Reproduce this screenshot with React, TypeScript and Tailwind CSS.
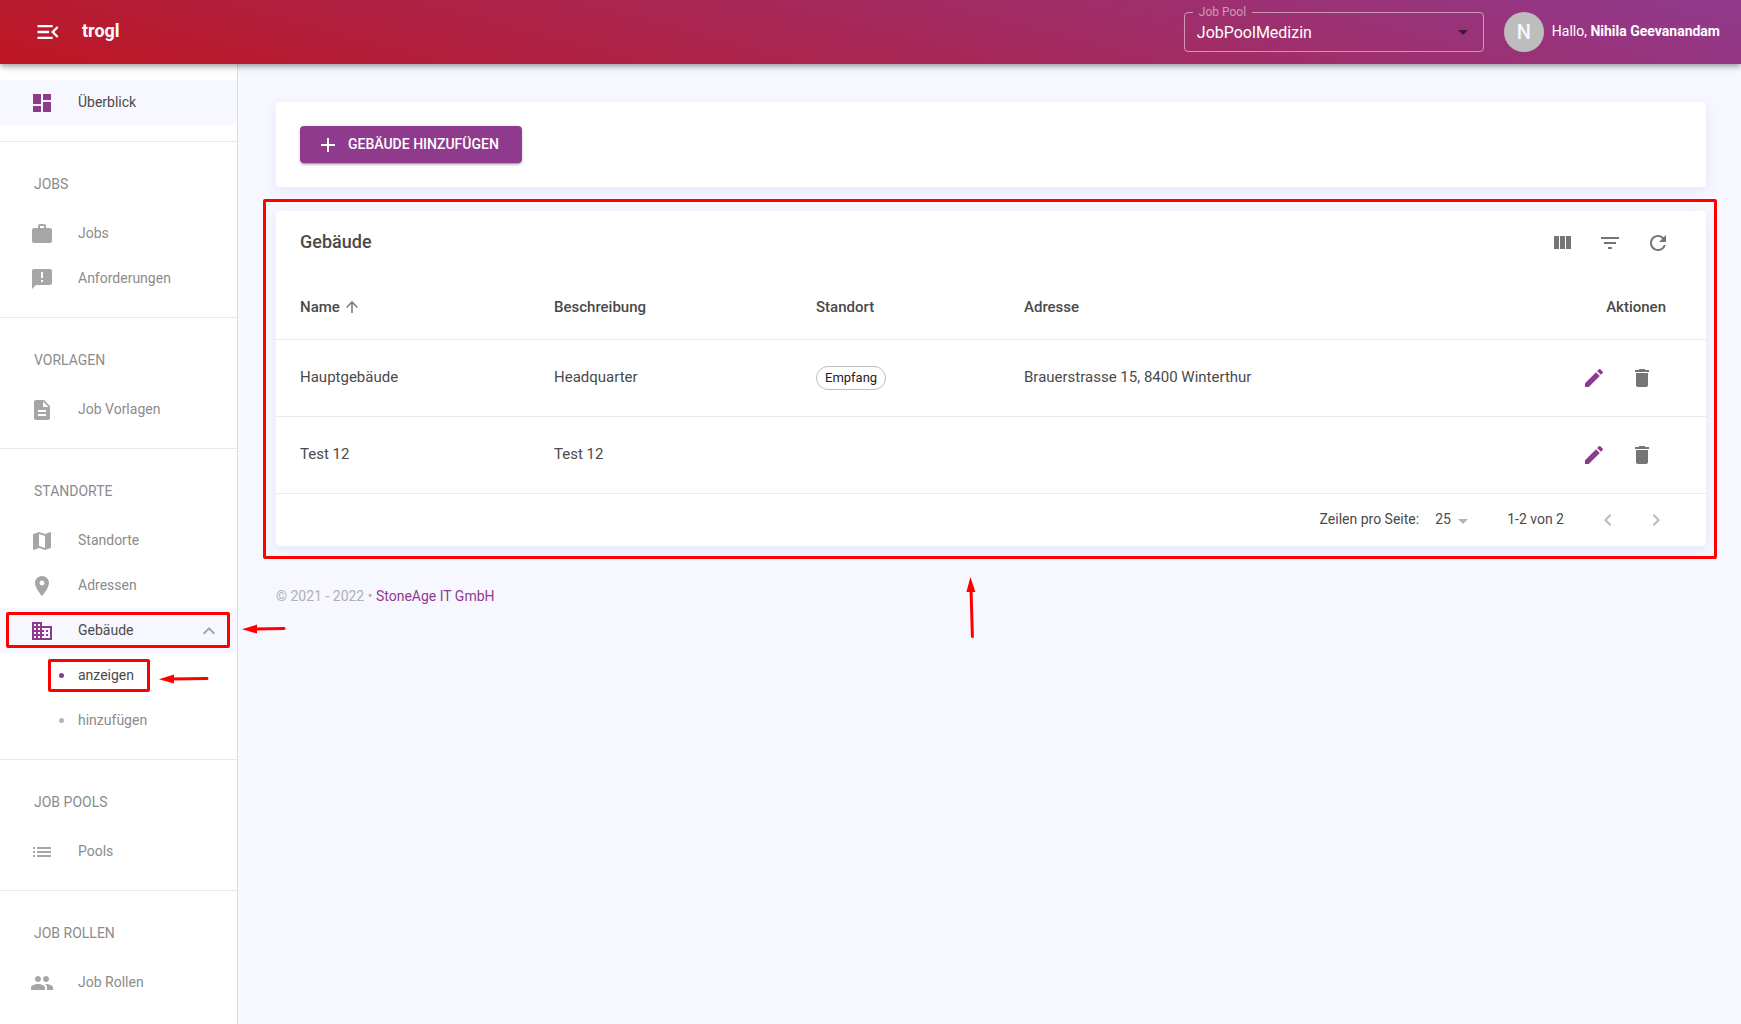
import { Fragment } from 'react';
import type { IconType } from 'react-icons';
import {
  MdAdd,
  MdAnnouncement,
  MdArrowDropDown,
  MdArrowUpward,
  MdBusiness,
  MdChevronLeft,
  MdChevronRight,
  MdDashboard,
  MdDelete,
  MdDescription,
  MdEdit,
  MdExpandLess,
  MdFilterList,
  MdList,
  MdLocationOn,
  MdMap,
  MdMenuOpen,
  MdPeople,
  MdRefresh,
  MdWork,
} from 'react-icons/md';

interface NavItem {
  label: string;
  icon: IconType;
  active?: boolean;
  children?: { label: string; active?: boolean }[];
}

interface NavSection {
  title?: string;
  items: NavItem[];
}

const sections: NavSection[] = [
  { items: [{ label: 'Überblick', icon: MdDashboard, active: true }] },
  {
    title: 'Jobs',
    items: [
      { label: 'Jobs', icon: MdWork },
      { label: 'Anforderungen', icon: MdAnnouncement },
    ],
  },
  { title: 'Vorlagen', items: [{ label: 'Job Vorlagen', icon: MdDescription }] },
  {
    title: 'Standorte',
    items: [
      { label: 'Standorte', icon: MdMap },
      { label: 'Adressen', icon: MdLocationOn },
      {
        label: 'Gebäude',
        icon: MdBusiness,
        active: true,
        children: [{ label: 'anzeigen', active: true }, { label: 'hinzufügen' }],
      },
    ],
  },
  { title: 'Job Pools', items: [{ label: 'Pools', icon: MdList }] },
  { title: 'Job Rollen', items: [{ label: 'Job Rollen', icon: MdPeople }] },
];

const buildings = [
  {
    name: 'Hauptgebäude',
    description: 'Headquarter',
    location: 'Empfang',
    address: 'Brauerstrasse 15, 8400 Winterthur',
  },
  { name: 'Test 12', description: 'Test 12', location: '', address: '' },
];

function ColumnsIcon() {
  return (
    <svg viewBox="0 0 24 24" className="w-6 h-6" fill="currentColor">
      <path d="M10 18h5V5h-5v13zm-6 0h5V5H4v13zM16 5v13h5V5h-5z" />
    </svg>
  );
}

function ArrowLeft({ length }: { length: number }) {
  return (
    <svg width={length} height="10" viewBox={`0 0 ${length} 10`} fill="#ff0000">
      <path d="M0 5.2 15 .6V9.6z" />
      <path d={`M12 5 ${length - 2} 4.5`} stroke="#ff0000" strokeWidth="3" strokeLinecap="round" />
    </svg>
  );
}

function ArrowUp() {
  return (
    <svg width="10" height="62" viewBox="0 0 10 62" fill="#ff0000">
      <path d="M4.4 0 9.4 15H.4z" />
      <path d="M5 12 6.4 59.5" stroke="#ff0000" strokeWidth="3" strokeLinecap="round" />
    </svg>
  );
}

function Header() {
  return (
    <header className="relative z-20 h-16 flex items-center pl-[34px] pr-[21px] text-white bg-[linear-gradient(15deg,#be1622,#903a8e)] shadow-[0_2px_4px_-1px_rgba(0,0,0,0.2),0_4px_5px_rgba(0,0,0,0.14),0_1px_10px_rgba(0,0,0,0.12)]">
      <button aria-label="Menü" className="mr-5">
        <MdMenuOpen className="w-7 h-7" />
      </button>
      <span className="pb-0.5 text-lg font-bold">trogl</span>

      <fieldset className="relative w-[300px] h-12 ml-auto mb-2 border border-white/50 rounded px-3 min-w-0">
        <legend className="-ml-1 px-[6px] text-xs leading-4 text-white/50">
          <label htmlFor="pool">Job Pool</label>
        </legend>
        <select id="pool" className="appearance-none w-full h-[26px] text-base bg-transparent outline-none">
          <option>JobPoolMedizin</option>
        </select>
        <MdArrowDropDown className="absolute right-2 top-0 w-6 h-6 text-black/55 pointer-events-none" />
      </fieldset>

      <div className="w-10 h-10 ml-5 rounded-full bg-[#bdbdbd] text-[#f6f7ff] flex items-center justify-center text-xl font-medium">
        N
      </div>
      <p className="ml-2 pb-0.5 text-sm">
        Hallo, <span className="font-bold">Nihila Geevanandam</span>
      </p>
    </header>
  );
}

function Sidebar() {
  return (
    <nav className="relative z-10 w-[238px] shrink-0 bg-white border-r border-[#dddde4] text-sm text-[#8b8b8b]">
      {sections.map((section, i) => (
        <div key={i} className="py-4 border-b border-[#e8e8e8] last:border-b-0">
          {section.title && (
            <h2 className="h-[53px] pl-[34px] pb-0.5 flex items-center uppercase">{section.title}</h2>
          )}
          {section.items.map(item => (
            <Fragment key={item.label}>
              <a
                href="#"
                className={`relative h-[45px] pl-[30px] pr-4 flex items-center ${item.active ? 'bg-[#f6f7ff] text-[#4a4a4a]' : ''}`}
              >
                <item.icon className={`w-6 h-6 mr-6 ${item.active ? 'text-[#903a8e]' : 'text-[#a6a6a6]'}`} />
                <span className="pb-0.5">{item.label}</span>
                {item.children && (
                  <>
                    <MdExpandLess className="w-6 h-6 ml-auto text-[#a6a6a6]" />
                    <span className="absolute left-[6px] right-[7px] top-1 bottom-[5px] border-3 border-[#ff0000] rounded-xs" />
                    <span className="absolute left-[242px] top-4">
                      <ArrowLeft length={44} />
                    </span>
                  </>
                )}
              </a>
              {item.children?.map(child => (
                <a
                  key={child.label}
                  href="#"
                  className={`relative h-[45px] pl-[59px] flex items-center ${child.active ? 'text-[#4a4a4a]' : ''}`}
                >
                  <span
                    className={`w-[5px] h-[5px] mr-[14px] rounded-full ${child.active ? 'bg-[#903a8e]' : 'bg-[#b5b5b5]'}`}
                  />
                  <span className="pb-0.5">{child.label}</span>
                  {child.active && (
                    <>
                      <span className="absolute left-12 w-[102px] top-[6px] bottom-[6px] border-3 border-[#ff0000] rounded-xs" />
                      <span className="absolute left-[159px] top-[21px]">
                        <ArrowLeft length={50} />
                      </span>
                    </>
                  )}
                </a>
              ))}
            </Fragment>
          ))}
        </div>
      ))}
    </nav>
  );
}

function BuildingsTable() {
  return (
    <section className="relative mt-6 bg-white rounded shadow-[0_4px_14px_rgba(70,70,200,0.09)] text-[#4a4a4a]">
      <div className="h-16 px-6 flex items-center">
        <h1 className="text-lg font-medium pb-0.5">Gebäude</h1>
        <div className="ml-auto flex text-[#757575]">
          <button aria-label="Spalten" className="p-3">
            <ColumnsIcon />
          </button>
          <button aria-label="Filter" className="p-3">
            <MdFilterList className="w-6 h-6" />
          </button>
          <button aria-label="Aktualisieren" className="p-3">
            <MdRefresh className="w-6 h-6" />
          </button>
        </div>
      </div>

      <table className="w-full table-fixed text-[15px] text-left">
        <thead>
          <tr className="h-16 border-b border-[#ebebeb]">
            <th className="w-[262px] pl-6 font-medium">
              <button className="flex items-center gap-[3px]">
                Name
                <MdArrowUpward className="w-[18px] h-[18px] text-[#757575]" />
              </button>
            </th>
            <th className="w-[262px] pl-4 font-medium">Beschreibung</th>
            <th className="w-[208px] pl-4 font-medium">Standort</th>
            <th className="pl-4 font-medium">Adresse</th>
            <th className="w-[200px] pr-10 font-medium text-right">Aktionen</th>
          </tr>
        </thead>
        <tbody>
          {buildings.map(b => (
            <tr key={b.name} className="h-[77px] border-b border-[#ebebeb]">
              <td className="pl-6">{b.name}</td>
              <td className="pl-4">{b.description}</td>
              <td className="pl-4">
                {b.location && (
                  <span className="inline-flex items-center h-6 px-2 border border-[#bdbdbd] rounded-full text-[13px] text-[#222222]">
                    {b.location}
                  </span>
                )}
              </td>
              <td className="pl-4">{b.address}</td>
              <td className="pr-10">
                <div className="flex justify-end">
                  <button aria-label="Bearbeiten" className="p-3 text-[#903a8e]">
                    <MdEdit className="w-6 h-6" />
                  </button>
                  <button aria-label="Löschen" className="p-3 text-[#757575]">
                    <MdDelete className="w-6 h-6" />
                  </button>
                </div>
              </td>
            </tr>
          ))}
        </tbody>
      </table>

      <div className="h-[52px] pr-[26px] flex items-center justify-end text-sm">
        <label htmlFor="rows" className="pb-0.5">
          Zeilen pro Seite:
        </label>
        <div className="relative ml-4 w-10 pb-0.5">
          <select id="rows" className="block appearance-none w-full bg-transparent outline-none">
            <option>25</option>
          </select>
          <MdArrowDropDown className="absolute right-0 top-0 w-6 h-6 text-[#b5b5b5] pointer-events-none" />
        </div>
        <span className="ml-8 mr-5 pb-0.5">1-2 von 2</span>
        <button aria-label="Vorherige Seite" className="p-3 text-[#b9b9b9]">
          <MdChevronLeft className="w-6 h-6" />
        </button>
        <button aria-label="Nächste Seite" className="p-3 text-[#b9b9b9]">
          <MdChevronRight className="w-6 h-6" />
        </button>
      </div>

      <div className="absolute -left-[13px] -right-[11px] -top-3 -bottom-[13px] border-3 border-[#ff0000] rounded-xs pointer-events-none" />
      <span className="absolute left-[690px] top-[366px]">
        <ArrowUp />
      </span>
    </section>
  );
}

export default function App() {
  return (
    <div className="min-h-screen flex flex-col bg-[#f6f7ff] font-[Roboto,sans-serif]">
      <Header />
      <div className="flex flex-1">
        <Sidebar />
        <main className="flex-1 min-w-0 pt-[38px] pl-[38px] pr-[35px]">
          <div className="p-6 bg-white rounded shadow-[0_4px_14px_rgba(70,70,200,0.09)]">
            <button className="h-[37px] pl-4 pr-[23px] flex items-center gap-2 rounded bg-[#903a8e] text-white text-sm font-medium uppercase shadow-[0_3px_1px_-2px_rgba(0,0,0,0.2),0_2px_2px_rgba(0,0,0,0.14),0_1px_5px_rgba(0,0,0,0.12)]">
              <MdAdd className="w-6 h-6" />
              <span className="pb-0.5">Gebäude hinzufügen</span>
            </button>
          </div>
          <BuildingsTable />
          <footer className="mt-10 text-sm text-[#b0b0b5]">
            © 2021 - 2022 •{' '}
            <a href="#" className="text-[#903a8e]">
              StoneAge IT GmbH
            </a>
          </footer>
        </main>
      </div>
    </div>
  );
}
